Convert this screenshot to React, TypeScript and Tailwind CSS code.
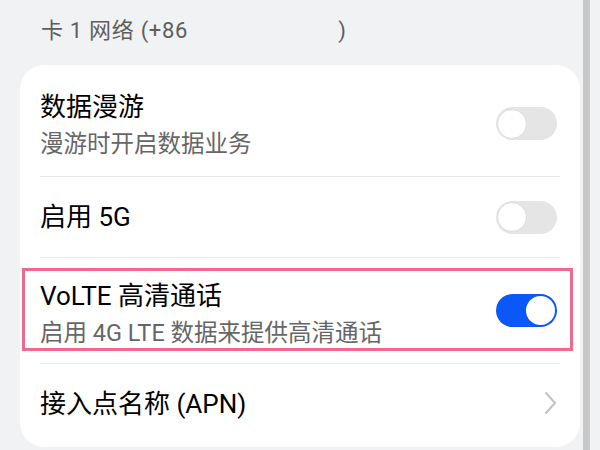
import React from 'react';

const font = { fontFamily: 'Roboto, "Noto Sans CJK SC", sans-serif' };

function Toggle({ on }: { on: boolean }) {
    if (on) {
        return (
            <div className="relative w-[61px] h-[33px] rounded-full bg-[#0a59f7] shrink-0">
                <div className="absolute right-[2px] top-[2px] w-[29px] h-[29px] rounded-full bg-white" />
            </div>
        );
    }
    return (
        <div className="relative w-[61px] h-[33px] rounded-full bg-[#e5e5e5] shrink-0">
            <div className="absolute left-[1px] top-[1.5px] w-[30px] h-[30px] rounded-full bg-white border border-[#dcdcdc]" />
        </div>
    );
}

function Divider() {
    return <div className="h-px bg-[#e8e8e8]" />;
}

export default function App() {
    return (
        <div className="w-[600px] h-[450px] bg-[#f1f2f4] flex overflow-hidden" style={font}>
            <div className="w-[583px] pl-[20px] pr-[3px] flex flex-col">
                <div className="h-[65px] shrink-0 flex items-center pl-[21px] pb-[4px] text-[22px] tracking-[0.7px] text-[#5e5e5e]">
                    <span>卡 1 网络 (+86</span>
                    <span className="ml-[150px]">)</span>
                </div>
                <div className="bg-white rounded-[24px] px-[20px] h-[382px]">
                    <div className="h-[111px] flex items-center justify-between pt-[6px]">
                        <div className="flex flex-col mt-[4px]">
                            <div className="text-[26px] leading-[34px] text-black">数据漫游</div>
                            <div className="text-[23.5px] leading-[34px] mt-[3px] text-[#666666]">漫游时开启数据业务</div>
                        </div>
                        <div className="mr-[3px]">
                            <Toggle on={false} />
                        </div>
                    </div>
                    <Divider />
                    <div className="h-[80px] flex items-center justify-between">
                        <div className="text-[26px] leading-[34px] text-black">启用 5G</div>
                        <div className="mr-[3px]">
                            <Toggle on={false} />
                        </div>
                    </div>
                    <Divider />
                    <div className="relative h-[105px] flex items-center justify-between">
                        <div className="absolute left-[-18px] right-[-13px] top-[10px] bottom-[12px] border-[3px] border-[#f0698f] pointer-events-none" />
                        <div className="flex flex-col mt-[8px]">
                            <div className="text-[26px] leading-[34px] text-black">VoLTE 高清通话</div>
                            <div className="text-[23.5px] leading-[34px] mt-[3px] text-[#666666]">启用 4G LTE 数据来提供高清通话</div>
                        </div>
                        <div className="mr-[3px]">
                            <Toggle on={true} />
                        </div>
                    </div>
                    <Divider />
                    <div className="h-[84px] flex items-center justify-between pb-[4px]">
                        <div className="text-[26px] leading-[34px] text-black">接入点名称 (APN)</div>
                        <svg width="14" height="24" viewBox="0 0 14 24" className="mr-[2px] mb-[2px]">
                            <path d="M2 2 L11 12 L2 22" fill="none" stroke="#c2c2c2" strokeWidth="2" strokeLinecap="round" strokeLinejoin="round" />
                        </svg>
                    </div>
                </div>
            </div>
            <div className="w-[7px] h-full bg-[#c8c8c8]" />
        </div>
    );
}
